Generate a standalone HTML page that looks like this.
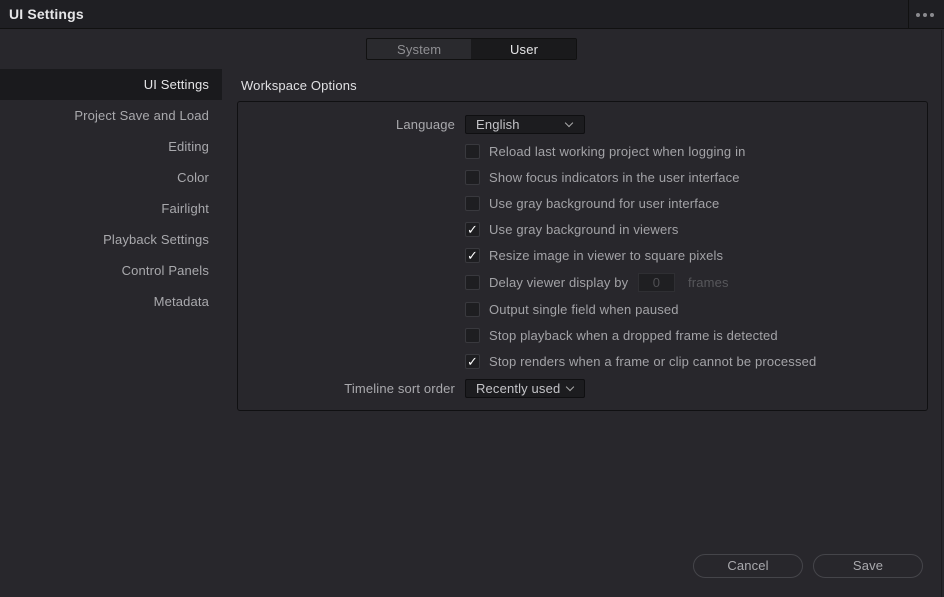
<!DOCTYPE html>
<html><head><style>
*{margin:0;padding:0;box-sizing:border-box}
body{width:944px;height:597px;background:#28272c;font-family:"Liberation Sans",sans-serif;font-size:13px;color:#a9a9ad;position:relative;overflow:hidden;letter-spacing:0.15px}
.a{position:absolute;white-space:nowrap}
.title{left:0;top:0;width:944px;height:29px;background:#1f1f23;border-bottom:1px solid #111}
.nav{right:735px;text-align:right;line-height:16px}
.cb{left:465px;width:15px;height:15px;background:#1e1e21;border:1px solid #39393e;border-radius:2px;color:#fff;font-size:13px;line-height:13px;text-align:center}
.lb{left:489px;line-height:16px;color:#a3a3a7}
.dd{background:#1c1c1f;border:1px solid #0f0f11;border-radius:2px;color:#c4c4c8;padding-left:10px;line-height:17px}
.chev{position:absolute;width:6px;height:6px;border-right:1.3px solid #aaa;border-bottom:1.3px solid #aaa;transform:rotate(45deg)}
.btn{top:554px;width:110px;height:24px;border:1px solid #45454a;border-radius:12px;text-align:center;line-height:22px;color:#a9a9ad}
</style></head><body>
<div class="a title"></div>
<div class="a" style="left:9px;top:6px;color:#e6e6e8;font-size:14px;font-weight:600;">UI Settings</div>
<div class="a" style="left:908px;top:0;width:1px;height:29px;background:#111"></div>
<div class="a" style="left:916px;top:13px;width:4px;height:4px;border-radius:2px;background:#8a8a8e"></div>
<div class="a" style="left:923px;top:13px;width:4px;height:4px;border-radius:2px;background:#8a8a8e"></div>
<div class="a" style="left:930px;top:13px;width:4px;height:4px;border-radius:2px;background:#8a8a8e"></div>
<div class="a" style="left:941px;top:30px;width:1px;height:567px;background:#1c1c1f"></div>

<div class="a" style="left:366px;top:38px;width:211px;height:22px;border:1px solid #111;border-radius:2px;background:#2a2a2e"></div>
<div class="a" style="left:471px;top:39px;width:105px;height:20px;background:#1a1a1c"></div>
<div class="a" style="left:397px;top:42px;color:#8f8f93">System</div>
<div class="a" style="left:510px;top:42px;color:#e6e6e8">User</div>

<div class="a" style="left:0;top:69px;width:222px;height:31px;background:#1a1a1d"></div>
<div class="a nav" style="top:77px;color:#e6e6e8">UI Settings</div>
<div class="a nav" style="top:108px">Project Save and Load</div>
<div class="a nav" style="top:139px">Editing</div>
<div class="a nav" style="top:170px">Color</div>
<div class="a nav" style="top:201px">Fairlight</div>
<div class="a nav" style="top:232px">Playback Settings</div>
<div class="a nav" style="top:263px">Control Panels</div>
<div class="a nav" style="top:294px">Metadata</div>

<div class="a" style="left:241px;top:78px;color:#e0e0e3">Workspace Options</div>
<div class="a" style="left:237px;top:101px;width:691px;height:310px;border:1px solid #101012;border-radius:3px"></div>

<div class="a" style="right:489px;top:117px">Language</div>
<div class="a dd" style="left:465px;top:115px;width:120px;height:19px">English<span class="chev" style="left:100px;top:4px"></span></div>

<div class="a cb" style="top:144px"></div><div class="a lb" style="top:144px">Reload last working project when logging in</div>
<div class="a cb" style="top:170px"></div><div class="a lb" style="top:170px">Show focus indicators in the user interface</div>
<div class="a cb" style="top:196px"></div><div class="a lb" style="top:196px">Use gray background for user interface</div>
<div class="a cb" style="top:222px">&#10003;</div><div class="a lb" style="top:222px">Use gray background in viewers</div>
<div class="a cb" style="top:248px">&#10003;</div><div class="a lb" style="top:248px">Resize image in viewer to square pixels</div>
<div class="a cb" style="top:275px"></div><div class="a lb" style="top:275px">Delay viewer display by</div>
<div class="a" style="left:638px;top:273px;width:37px;height:19px;background:#1f1f22;border:1px solid #2f2f33;color:#4f4f53;text-align:center;line-height:17px">0</div>
<div class="a" style="left:688px;top:275px;color:#57575b">frames</div>
<div class="a cb" style="top:302px"></div><div class="a lb" style="top:302px">Output single field when paused</div>
<div class="a cb" style="top:328px"></div><div class="a lb" style="top:328px">Stop playback when a dropped frame is detected</div>
<div class="a cb" style="top:354px">&#10003;</div><div class="a lb" style="top:354px">Stop renders when a frame or clip cannot be processed</div>

<div class="a" style="right:489px;top:381px">Timeline sort order</div>
<div class="a dd" style="left:465px;top:379px;width:120px;height:19px">Recently used<span class="chev" style="left:101px;top:4px"></span></div>

<div class="a btn" style="left:693px">Cancel</div>
<div class="a btn" style="left:813px">Save</div>
</body></html>
